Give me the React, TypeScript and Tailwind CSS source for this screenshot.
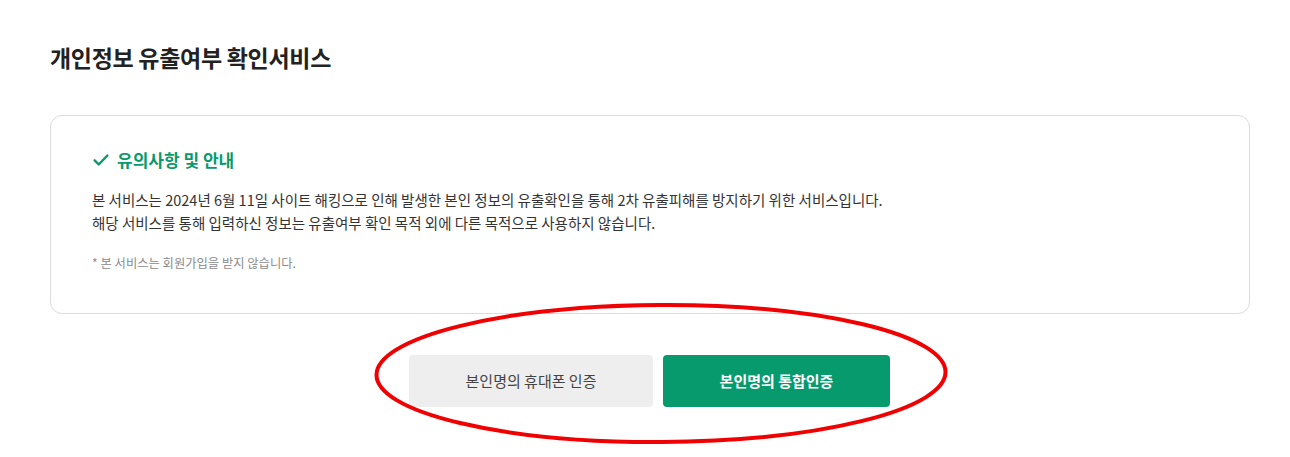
import React from 'react';

const CheckIcon = () => (
  <svg width="18" height="18" viewBox="0 0 24 24" fill="none" stroke="currentColor" strokeWidth="3.2" strokeLinecap="round" strokeLinejoin="round">
    <path d="M3.5 12.5l5.5 5.5L20.5 6" />
  </svg>
);

const App = () => {
  return (
    <div
      className="relative w-[1290px] h-[457px] bg-white text-[#222]"
      style={{ fontFamily: '"Noto Sans CJK KR", "Noto Sans", sans-serif' }}>
      <div className="px-[40px] pt-[40px]">
        <h1 className="pl-[10px] text-[23px] leading-[34px] font-bold text-[#222] tracking-[-0.3px]">
          개인정보 유출여부 확인서비스
        </h1>

        <div className="ml-[10px] mt-[41px] rounded-[12px] border border-[#dcdcdc] pl-[41px] pr-10 pt-[32px] pb-[41px]">
          <div className="flex items-center gap-[7px] h-[24px] text-[#079a6c]">
            <CheckIcon />
            <span className="text-[17px] leading-[24px] font-bold">유의사항 및 안내</span>
          </div>
          <div className="mt-[16px] text-[14.5px] leading-[23px] text-[#333]">
            <p>본 서비스는 2024년 6월 11일 사이트 해킹으로 인해 발생한 본인 정보의 유출확인을 통해 2차 유출피해를 방지하기 위한 서비스입니다.</p>
            <p>해당 서비스를 통해 입력하신 정보는 유출여부 확인 목적 외에 다른 목적으로 사용하지 않습니다.</p>
          </div>
          <p className="mt-[20px] text-[12.3px] leading-[18px] text-[#8a8a8a]">* 본 서비스는 회원가입을 받지 않습니다.</p>
        </div>

        <div className="mt-[41px] flex justify-center gap-[10px] pl-[9px]">
          <button className="w-[244px] h-[52px] rounded-[4px] bg-[#eeeeee] text-[15px] text-[#444]">
            본인명의 휴대폰 인증
          </button>
          <button className="w-[227px] h-[52px] rounded-[4px] bg-[#079a6c] text-[15px] font-bold text-white">
            본인명의 통합인증
          </button>
        </div>
      </div>

      <svg className="absolute left-0 top-0 pointer-events-none" width="1290" height="457">
        <ellipse cx="661" cy="373.5" rx="284.5" ry="68.5" fill="none" stroke="#f00000" strokeWidth="4" transform="rotate(-0.3 661 373.5)" />
      </svg>
    </div>
  );
};

export default App;
